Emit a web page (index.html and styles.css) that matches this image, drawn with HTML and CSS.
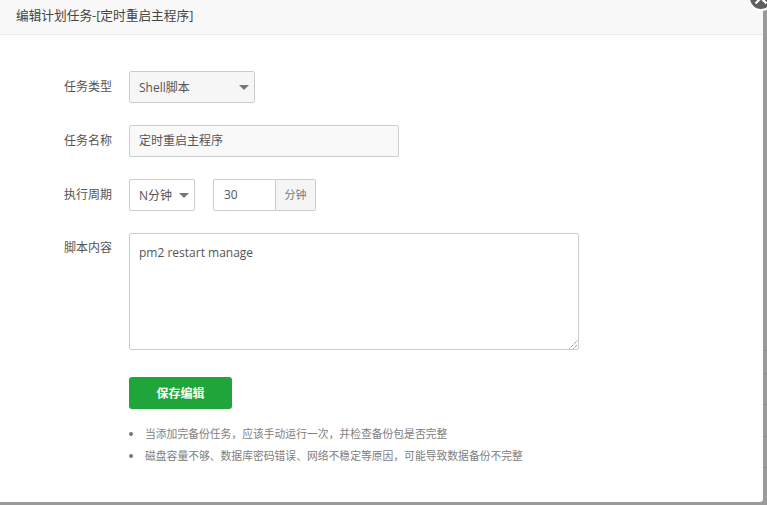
FILE: index.html
```html
<!DOCTYPE html>
<html lang="zh">
<head>
<meta charset="utf-8">
<title>编辑计划任务</title>
<link rel="stylesheet" href="styles.css">
</head>
<body>
<div class="modal">
  <header class="modal-title">编辑计划任务-[定时重启主程序]</header>
  <form class="form">
    <div class="row">
      <span class="label">任务类型</span>
      <div class="select select-type"><span>Shell脚本</span><i class="caret"></i></div>
    </div>
    <div class="row">
      <span class="label">任务名称</span>
      <div class="input input-name">定时重启主程序</div>
    </div>
    <div class="row">
      <span class="label">执行周期</span>
      <div class="select select-cycle"><span>N分钟</span><i class="caret"></i></div>
      <div class="group">
        <div class="group-value">30</div>
        <div class="group-unit">分钟</div>
      </div>
    </div>
    <div class="row row-top">
      <span class="label">脚本内容</span>
      <div class="textarea">pm2 restart manage
        <svg class="grip" width="9" height="9" viewBox="0 0 9 9"><path d="M0.5 8.5L8.5 0.5M4.5 8.5L8.5 4.5" stroke="#666" stroke-width="1" stroke-dasharray="1 1" fill="none"/></svg>
      </div>
    </div>
    <div class="actions"><button type="button" class="save">保存编辑</button></div>
    <ul class="tips">
      <li>当添加完备份任务，应该手动运行一次，并检查备份包是否完整</li>
      <li>磁盘容量不够、数据库密码错误、网络不稳定等原因，可能导致数据备份不完整</li>
    </ul>
  </form>
</div>
<div class="close"><svg width="14" height="14" viewBox="0 0 14 14"><path d="M1.5 1.5L12.5 12.5M12.5 1.5L1.5 12.5" stroke="#fff" stroke-width="2.2" fill="none"/></svg></div>
</body>
</html>
```
FILE: styles.css
```css
* { box-sizing: border-box; }
html, body { margin: 0; height: 100%; }
body {
  width: 767px;
  height: 505px;
  overflow: hidden;
  background: linear-gradient(to bottom,
    #9a9a9a 350px, #8e8e8e 350px, #8e8e8e 351px,
    #9a9a9a 351px, #9a9a9a 373px, #8e8e8e 373px, #8e8e8e 374px,
    #9a9a9a 374px, #9a9a9a 404px, #8e8e8e 404px, #8e8e8e 405px,
    #9a9a9a 405px, #9a9a9a 436px, #8e8e8e 436px, #8e8e8e 437px,
    #9a9a9a 437px, #9a9a9a 467px, #8e8e8e 467px, #8e8e8e 468px,
    #9a9a9a 468px);
  font-family: "Open Sans", "Noto Sans CJK SC", sans-serif;
  font-size: 12px;
  color: #555;
  padding: 0 4px 3px 0;
}
.modal {
  width: 763px;
  height: 502px;
  background: #fff;
  border-radius: 0 0 3px 0;
}
.modal-title {
  height: 35px;
  background: #f8f8f8;
  border-bottom: 1px solid #eee;
  padding-left: 16px;
  line-height: 30px;
  font-size: 12.7px;
  color: #444;
}
.form { padding: 36px 0 0 64px; }
.row { display: flex; align-items: center; height: 32px; margin-bottom: 22px; }
.row-top { align-items: flex-start; height: 117px; margin-bottom: 27px; }
.label { width: 65px; flex: none; line-height: 32px; color: #555; }
.row-top .label { line-height: 30px; }
.select {
  height: 32px;
  border: 1px solid #ccc;
  border-radius: 2px;
  display: flex;
  align-items: center;
  justify-content: space-between;
  padding: 0 4px 0 9px;
}
.select-type { width: 126px; background: #f6f6f6; }
.select-cycle { width: 66px; background: #fff; }
.caret {
  width: 0;
  height: 0;
  margin-right: 1px;
  border-left: 5px solid transparent;
  border-right: 5px solid transparent;
  border-top: 5px solid #777;
}
.input {
  width: 270px;
  height: 32px;
  line-height: 30px;
  padding-left: 9px;
  background: #f9f9f9;
  border: 1px solid #ccc;
  border-radius: 2px;
}
.group { display: flex; margin-left: 18px; height: 32px; }
.group-value {
  width: 63px;
  line-height: 30px;
  padding-left: 10px;
  border: 1px solid #ccc;
  border-radius: 2px 0 0 2px;
}
.group-unit {
  width: 40px;
  line-height: 30px;
  text-align: center;
  font-size: 11px;
  color: #777;
  background: #f5f5f5;
  border: 1px solid #ccc;
  border-left: 0;
  border-radius: 0 2px 2px 0;
}
.textarea {
  position: relative;
  width: 450px;
  height: 117px;
  padding: 10px 9px;
  line-height: 18px;
  border: 1px solid #ccc;
  border-radius: 2px;
}
.grip { position: absolute; right: 0; bottom: 0; }
.actions { padding-left: 65px; }
.save {
  display: block;
  width: 103px;
  height: 32px;
  padding: 0;
  border: 0;
  border-radius: 3px;
  background: #20a53a;
  color: #fff;
  font: 700 12px "Open Sans", "Noto Sans CJK SC", sans-serif;
}
.tips {
  list-style: none;
  margin: 14px 0 0 65px;
  padding: 0;
  font-size: 10.8px;
  line-height: 22px;
  color: #808080;
}
.tips li { display: flex; align-items: center; }
.tips li::before {
  content: "";
  flex: none;
  width: 4px;
  height: 4px;
  margin-right: 12px;
  border-radius: 50%;
  background: #777;
}
.close {
  position: absolute;
  left: 748px;
  top: -15px;
  width: 26px;
  height: 26px;
  border-radius: 50%;
  background: #5f5f5f;
  border: 2px solid #fff;
  display: flex;
  align-items: center;
  justify-content: center;
}
```
